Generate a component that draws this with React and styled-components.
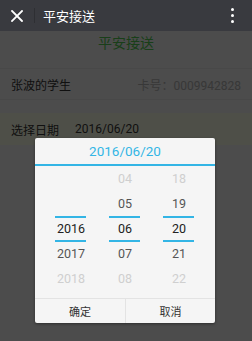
import React from 'react';
import styled, { createGlobalStyle } from 'styled-components';

const GlobalStyle = createGlobalStyle`
  html, body {
    margin: 0;
    padding: 0;
  }
  body {
    font-family: Roboto, "Noto Sans CJK SC", sans-serif;
  }
`;

const columns = [
  { key: 'year', items: ['', '', '2016', '2017', '2018'] },
  { key: 'month', items: ['04', '05', '06', '07', '08'] },
  { key: 'day', items: ['18', '19', '20', '21', '22'] },
];

const tones = ['#cfcfcf', '#555555', '#222222', '#555555', '#cfcfcf'];

const App = () => {
  return (
    <Screen>
      <GlobalStyle />
      <TopBar>
        <CloseButton>
          <svg width="12" height="12" viewBox="0 0 12 12">
            <path d="M1 1 L11 11 M11 1 L1 11" stroke="#ffffff" strokeWidth="1.8" strokeLinecap="square" />
          </svg>
        </CloseButton>
        <BarDivider />
        <BarTitle>平安接送</BarTitle>
        <MoreDots>
          <span />
          <span />
          <span />
        </MoreDots>
      </TopBar>

      <WebView>
        <PageTitle>平安接送</PageTitle>
        <InfoRow>
          <Label>张波的学生</Label>
          <CardNo>卡号：0009942828</CardNo>
        </InfoRow>
        <DateRow>
          <Label>选择日期</Label>
          <DateValue>2016/06/20</DateValue>
        </DateRow>

        <Overlay>
          <Dialog>
            <DialogTitle>2016/06/20</DialogTitle>
            <Wheels>
              {columns.map((col) => (
                <Wheel key={col.key}>
                  {col.items.map((item, i) => (
                    <WheelItem key={i} $color={tones[i]} $selected={i === 2}>
                      {item}
                    </WheelItem>
                  ))}
                </Wheel>
              ))}
            </Wheels>
            <Buttons>
              <DialogButton>确定</DialogButton>
              <DialogButton>取消</DialogButton>
            </Buttons>
          </Dialog>
        </Overlay>
      </WebView>
    </Screen>
  );
};

export default App;

const Screen = styled.div`
  width: 252px;
  height: 341px;
  display: flex;
  flex-direction: column;
  overflow: hidden;
`;

const TopBar = styled.div`
  height: 31px;
  flex-shrink: 0;
  background: #393a3f;
  display: flex;
  align-items: center;
`;

const CloseButton = styled.div`
  width: 34px;
  display: flex;
  justify-content: center;
  align-items: center;
`;

const BarDivider = styled.div`
  width: 1px;
  height: 15px;
  background: #2e2f33;
`;

const BarTitle = styled.div`
  margin-left: 8px;
  flex: 1;
  color: #ffffff;
  font-size: 13px;
`;

const MoreDots = styled.div`
  width: 40px;
  display: flex;
  flex-direction: column;
  align-items: center;
  gap: 3px;

  span {
    width: 3px;
    height: 3px;
    border-radius: 50%;
    background: #ffffff;
  }
`;

const WebView = styled.div`
  position: relative;
  flex: 1;
  background: #bdbdbd;
  display: flex;
  flex-direction: column;
`;

const PageTitle = styled.div`
  height: 38px;
  padding-top: 4px;
  box-sizing: border-box;
  text-align: center;
  color: #3f9e3f;
  font-size: 14px;
  line-height: 16px;
  border-bottom: 1px solid #b3b3b3;
`;

const InfoRow = styled.div`
  height: 30px;
  padding: 0 11px;
  display: flex;
  align-items: center;
  justify-content: space-between;
  border-bottom: 1px solid #b3b3b3;
  font-size: 12px;
`;

const Label = styled.span`
  color: #2a2a2a;
`;

const CardNo = styled.span`
  color: #8c8c8c;
`;

const DateRow = styled.div`
  margin-top: 13px;
  height: 32px;
  padding: 0 11px;
  display: flex;
  align-items: center;
  gap: 16px;
  background: #c4c6b4;
  font-size: 12px;
`;

const DateValue = styled.span`
  color: #2a2a2a;
`;

const Overlay = styled.div`
  position: absolute;
  inset: 0;
  background: rgba(0, 0, 0, 0.6);
  padding-top: 107px;
  box-sizing: border-box;
`;

const Dialog = styled.div`
  width: 180px;
  margin-left: 35px;
  background: #f5f5f5;
  border-radius: 2px;
  box-shadow: 0 1px 3px rgba(0, 0, 0, 0.4);
  display: flex;
  flex-direction: column;
`;

const DialogTitle = styled.div`
  height: 26px;
  line-height: 26px;
  text-align: center;
  color: #33b5e5;
  font-size: 13.5px;
  border-bottom: 2px solid #33b5e5;
`;

const Wheels = styled.div`
  display: grid;
  grid-template-columns: repeat(3, 54px);
  justify-content: center;
  padding-bottom: 7px;
  border-bottom: 1px solid #e3e3e3;
`;

const Wheel = styled.div`
  display: flex;
  flex-direction: column;
  align-items: center;
`;

const WheelItem = styled.div`
  position: relative;
  width: 100%;
  height: 25px;
  line-height: 25px;
  text-align: center;
  font-size: 12.5px;
  color: ${(p) => p.$color};

  ${(p) =>
    p.$selected &&
    `
    &::before, &::after {
      content: '';
      position: absolute;
      left: 11px;
      right: 12px;
      height: 2px;
      background: #33b5e5;
    }
    &::before { top: 0; }
    &::after { bottom: -1px; }
  `}
`;

const Buttons = styled.div`
  display: grid;
  grid-template-columns: 1fr 1fr;
  height: 24px;
`;

const DialogButton = styled.div`
  display: flex;
  align-items: center;
  justify-content: center;
  font-size: 11px;
  color: #333333;

  & + & {
    border-left: 1px solid #e3e3e3;
  }
`;
